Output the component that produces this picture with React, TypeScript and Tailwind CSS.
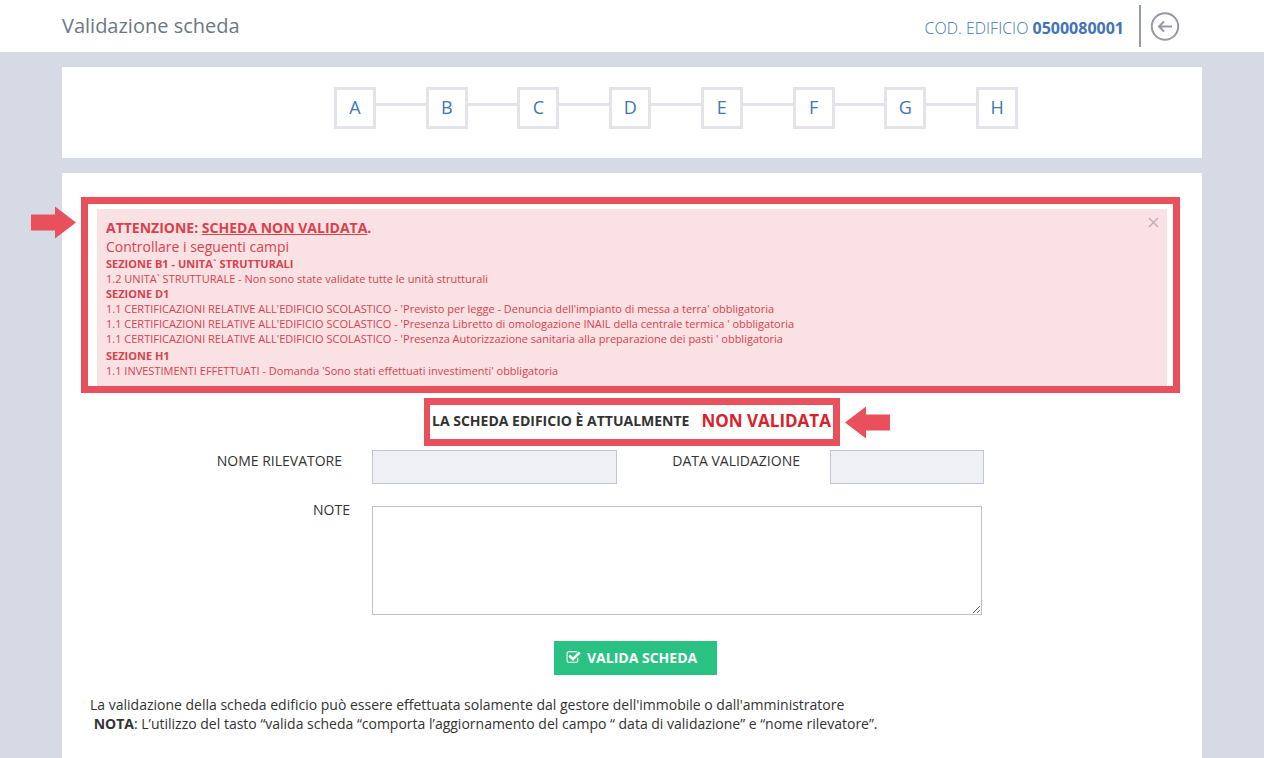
import React from 'react';

const steps = ['A', 'B', 'C', 'D', 'E', 'F', 'G', 'H'];

const errors = [
  {
    section: 'SEZIONE B1 - UNITA` STRUTTURALI',
    items: ['1.2 UNITA` STRUTTURALE - Non sono state validate tutte le unità strutturali']
  },
  {
    section: 'SEZIONE D1',
    items: [
      "1.1 CERTIFICAZIONI RELATIVE ALL'EDIFICIO SCOLASTICO - 'Previsto per legge - Denuncia dell'impianto di messa a terra' obbligatoria",
      "1.1 CERTIFICAZIONI RELATIVE ALL'EDIFICIO SCOLASTICO - 'Presenza Libretto di omologazione INAIL della centrale termica ' obbligatoria",
      "1.1 CERTIFICAZIONI RELATIVE ALL'EDIFICIO SCOLASTICO - 'Presenza Autorizzazione sanitaria alla preparazione dei pasti ' obbligatoria"
    ]
  },
  {
    section: 'SEZIONE H1',
    items: ["1.1 INVESTIMENTI EFFETTUATI - Domanda 'Sono stati effettuati investimenti' obbligatoria"]
  }
];

const Arrow: React.FC<{ className: string }> = ({ className }) => (
  <svg className={className} width="45" height="33" viewBox="0 0 45 33" fill="#e8505b" aria-hidden="true">
    <path d="M0 8.500H24V0.500L45 16.500L24 32.500V24.500H0Z" />
  </svg>
);

const CheckIcon: React.FC = () => (
  <svg width="15" height="15" viewBox="0 0 1792 1792" fill="currentColor" aria-hidden="true">
    <path d="M1472 930v318q0 119-84.500 203.500t-203.500 84.500h-832q-119 0-203.500-84.500t-84.500-203.500v-832q0-119 84.500-203.500t203.500-84.500h832q63 0 117 25 15 7 18 23 3 17-9 29l-49 49q-10 10-23 10-3 0-9-2-23-6-45-6h-832q-66 0-113 47t-47 113v832q0 66 47 113t113 47h832q66 0 113-47t47-113v-254q0-13 9-22l64-64q10-10 23-10 6 0 12 3 20 8 20 29zm231-489l-814 814q-24 24-57 24t-57-24l-430-430q-24-24-24-57t24-57l110-110q24-24 57-24t57 24l263 263 647-647q24-24 57-24t57 24l110 110q24 24 24 57t-24 57z" />
  </svg>
);

const Header: React.FC = () => (
  <header className="bg-white">
    <div className="max-w-[1140px] h-13 mx-auto flex items-center justify-between">
      <h1 className="text-[20px] text-[#6b7980]">Validazione scheda</h1>
      <div className="flex items-center pr-[22px]">
        <p className="text-[16px] font-light text-[#4272b8] pt-1">
          COD. EDIFICIO <strong className="font-bold">0500080001</strong>
        </p>
        <span className="w-[2px] h-[42px] ml-[15px] mr-[9px] bg-[#9499ad]" />
        <a href="#indietro" aria-label="Indietro">
          <svg width="30" height="30" viewBox="0 0 30 30" fill="none" stroke="#9698a8" strokeWidth="2" aria-hidden="true">
            <circle cx="15" cy="15.500" r="13.200" />
            <path d="M22 15.500H9M14 10.500L9 15.500L14 20.500" />
          </svg>
        </a>
      </div>
    </div>
  </header>
);

const Stepper: React.FC = () => (
  <nav className="bg-white pt-5 pb-[29px] pl-[272px] pr-[184px]">
    <ol className="flex">
      {steps.map((s, i) => (
        <li key={s} className={i > 0 ? 'flex flex-1' : 'flex'}>
          {i > 0 && <span className="flex-1 h-[3px] mt-4 bg-[#e2e4ea]" />}
          <a
            href={`#${s}`}
            className="size-[42px] border-[3px] border-[#e2e4ea] flex justify-center text-[18px] leading-[34px] text-[#4077b4]"
          >
            {s}
          </a>
        </li>
      ))}
    </ol>
  </nav>
);

const ErrorAlert: React.FC = () => (
  <div className="relative ml-[19px] mr-[22px] border-[7px] border-[#e8505b] pt-[5px] pl-[9px] pr-[6px]">
    <Arrow className="absolute -left-[57px] top-[2px]" />
    <div role="alert" className="relative bg-[#fae1e4] text-[#d9414c] pt-[9px] pb-2 pl-[9px] pr-8">
      <button type="button" aria-label="Chiudi" className="absolute right-2 top-2">
        <svg width="11" height="11" viewBox="0 0 11 11" stroke="#c9adb3" strokeWidth="1.500" aria-hidden="true">
          <path d="M1 1L10 10M10 1L1 10" />
        </svg>
      </button>
      <p className="text-[14px] leading-[19px] font-bold">
        ATTENZIONE: <span className="underline">SCHEDA NON VALIDATA</span>.
      </p>
      <p className="text-[14px] leading-[19px]">Controllare i seguenti campi</p>
      {errors.map((e) => (
        <div key={e.section} className="text-[11px] leading-[15px] last:mt-[2px]">
          <p className="font-bold">{e.section}</p>
          {e.items.map((item) => (
            <p key={item}>{item}</p>
          ))}
        </div>
      ))}
    </div>
  </div>
);

export default function App() {
  return (
    <div className="min-h-screen flex flex-col bg-[#d5dae4] font-['Open_Sans',sans-serif] text-[14px] text-[#333333]">
      <Header />
      <main className="w-full max-w-[1140px] mx-auto mt-[15px] flex-1 flex flex-col gap-[15px]">
        <Stepper />
        <section className="bg-white flex-1 pt-6 pb-6">
          <ErrorAlert />

          <div className="flex mt-[5px] pl-[362px]">
            <p className="h-12 border-[7px] border-l-[6px] border-[#e8505b] px-[2px] pb-[3px] flex items-center gap-3 font-bold whitespace-nowrap">
              LA SCHEDA EDIFICIO È ATTUALMENTE
              <strong className="text-[17px] font-bold text-[#d8232a]">NON VALIDATA</strong>
            </p>
            <Arrow className="rotate-180 mt-2 ml-[5px]" />
          </div>

          <form>
            <div className="flex mt-1">
              <label htmlFor="nome" className="w-[310px] pr-[30px] text-right">NOME RILEVATORE</label>
              <input id="nome" type="text" disabled className="w-[245px] h-[34px] border border-[#c2c6d0] bg-[#eef0f6] px-2" />
              <label htmlFor="data" className="w-[213px] pr-[30px] text-right">DATA VALIDAZIONE</label>
              <input id="data" type="text" disabled className="w-[154px] h-[34px] border border-[#c2c6d0] bg-[#eef0f6] px-2" />
            </div>
            <div className="flex mt-[22px]">
              <label htmlFor="note" className="w-[310px] pr-[22px] -mt-[7px] text-right">NOTE</label>
              <textarea id="note" className="w-[610px] h-[109px] border border-[#c2c2c6] bg-white p-2" />
            </div>
            <div className="flex mt-[26px] pl-[492px]">
              <button type="submit" className="w-[163px] h-[34px] bg-[#29c283] text-white font-bold flex items-center gap-[6px] pl-3 pb-[2px]">
                <CheckIcon />
                VALIDA SCHEDA
              </button>
            </div>
          </form>

          <div className="mt-5 pl-7 leading-[19px]">
            <p>La validazione della scheda edificio può essere effettuata solamente dal gestore dell'immobile o dall'amministratore</p>
            <p>
              &nbsp;<strong>NOTA</strong>: L’utilizzo del tasto “valida scheda “comporta l’aggiornamento del campo “ data di validazione” e “nome rilevatore”.
            </p>
          </div>
        </section>
      </main>
    </div>
  );
}
